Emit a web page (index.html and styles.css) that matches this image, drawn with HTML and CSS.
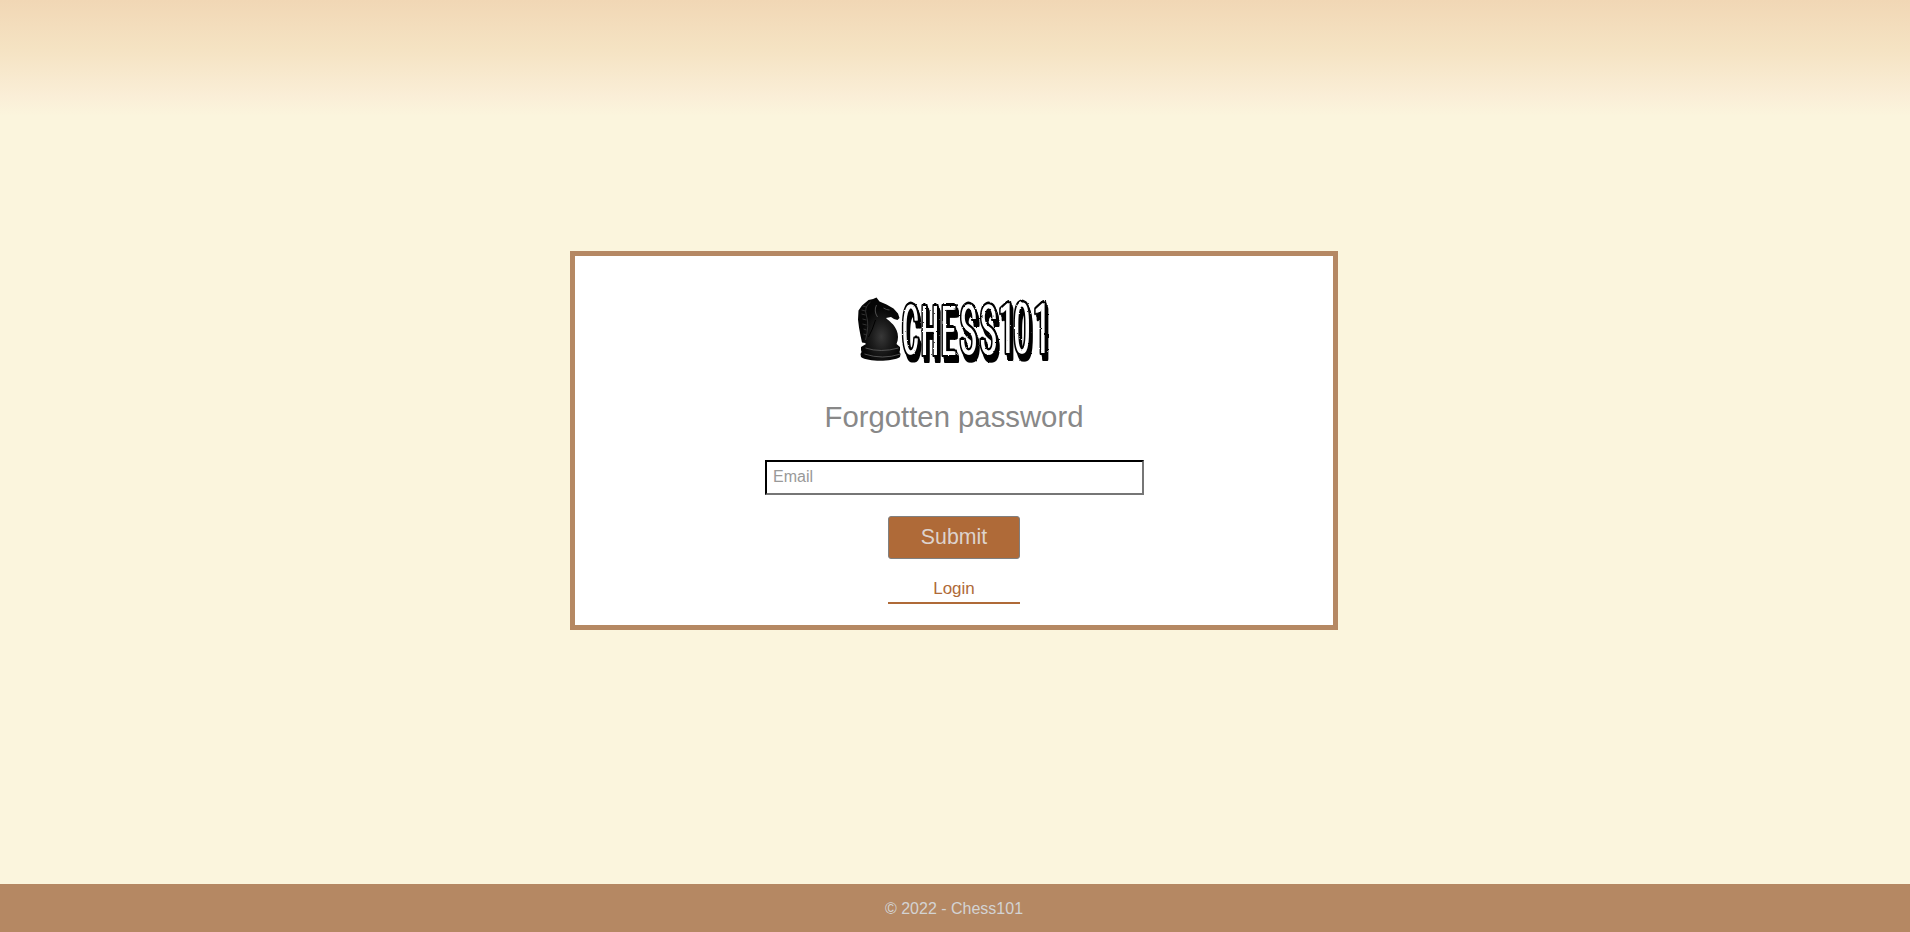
FILE: index.html
```html
<!DOCTYPE html>
<html lang="en">
<head>
<meta charset="utf-8">
<title>Chess101 - Forgotten password</title>
<link rel="stylesheet" href="styles.css">
</head>
<body>
<main class="page">
  <form class="card">
    <svg class="logo" viewBox="0 0 210 80" role="img" aria-label="Chess101">
      <defs>
        <radialGradient id="body" cx=".55" cy=".62" r=".45">
          <stop offset="0" stop-color="#383838"/><stop offset=".5" stop-color="#1c1c1c"/><stop offset="1" stop-color="#060606"/>
        </radialGradient>
        <filter id="worn" x="-5%" y="-5%" width="110%" height="110%">
          <feTurbulence type="fractalNoise" baseFrequency=".35" numOctaves="2" seed="4"/>
          <feDisplacementMap in="SourceGraphic" scale="2" xChannelSelector="R" yChannelSelector="G"/>
        </filter>
        <g id="word" class="word">
          <text transform="translate(52 64) scale(.36 1.03)">C</text>
          <text transform="translate(71 65) scale(.35 1.03)">H</text>
          <text transform="translate(91 65) scale(.36 1.03)">E</text>
          <text transform="translate(110 64) scale(.39 1.03)">S</text>
          <text transform="translate(130 64) scale(.39 1.03)">S</text>
          <text transform="translate(148.500 62.500) scale(.42 1.05)">1</text>
          <text transform="translate(163.500 62.500) scale(.42 1.05)">0</text>
          <text transform="translate(183.500 62.500) scale(.42 1.05)">1</text>
        </g>
      </defs>
      <g transform="translate(1.500 0)">
        <path fill="url(#body)" d="M17 10l4.500-1 3.500-1.500 3 4 7 3 7 4 4.500 5 1.500 4.500-2 2-3.500-1-3-2-5 1c3 3 8 6 10.500 12 2 5 2 9 0 14l3.500 3v3l-.5 2 1 2-.5 3c-8 5-32 5-39 0l-.5-3 1-2-.5-2v-3l5-3-1-1-3-.5-1.500-7-1.500-8-1-8 .5-9 3.500-5z"/>
        <path class="mane" d="M19 12q-7 5-4 14t-1 24M15 17l-4-1M14 21l-4-1M14 25l-4-1M15 30l-4-1M15 35l-4-1M15 40l-3-1M15 45l-3-1"/>
        <path class="neck" d="M24 30q-3 10-7 17"/>
        <path class="shine" d="M32 18q3 2 6 2M25 15q-3 6 1 12M14 58q15 5 33 0M13 64q18 6 36 0"/>
      </g>
      <g filter="url(#worn)">
        <g class="edge">
          <use href="#word" x="-1"/><use href="#word" x="2.400"/><use href="#word" x=".6" y="-1"/><use href="#word" x="1" y="2"/><use href="#word" x="3" y="2"/><use href="#word" x="2" y="4"/><use href="#word" x="4" y="4"/><use href="#word" x="4.500" y="6"/><use href="#word" x="3" y="6"/><use href="#word" x="1.500" y="6"/>
        </g>
        <g class="face"><use href="#word" x="-.2"/><use href="#word" x=".6"/><use href="#word" x="1.400"/></g>
      </g>
    </svg>
    <h1 class="title">Forgotten password</h1>
    <input class="email" type="email" placeholder="Email">
    <button class="submit" type="button">Submit</button>
    <a class="login">Login</a>
  </form>
</main>
<footer class="footer">© 2022 - Chess101</footer>
</body>
</html>
```
FILE: styles.css
```css
* { box-sizing: border-box; }
body {
  margin: 0;
  height: 932px;
  display: flex;
  flex-direction: column;
  font: 16px/18px "Liberation Sans", Arial, sans-serif;
  background: linear-gradient(#f1d7b5 0, #f5e3c3 50px, #faeed7 96px, #fbf5dd 116px, #fbf5dd 100%);
}
.page { flex: 1; padding-top: 251px; }
.card {
  width: 768px;
  height: 379px;
  margin: 0 auto 0 570px;
  border: 5px solid #b58863;
  background: #fff;
  display: flex;
  flex-direction: column;
  align-items: center;
}
.logo { width: 210px; height: 80px; margin-top: 34px; margin-left: 2px; }
.word { font: 300 67px Roboto, sans-serif; }
.edge { fill: #000; stroke: #000; stroke-width: 4px; stroke-linejoin: round; }
.face { fill: #fff; }
.mane { fill: none; stroke: #444; stroke-width: .7px; }
.neck { fill: none; stroke: #000; stroke-width: 1px; }
.shine { fill: none; stroke: #666; stroke-width: 1px; opacity: .75; }
.title {
  margin: 31px 0 0;
  font-size: 29.3px;
  line-height: 32px;
  font-weight: 400;
  color: #888;
}
.email {
  width: 379px;
  height: 35px;
  margin: 27px 0 0 1px;
  padding: 0 6px 2px;
  border: 2px inset #767676;
  border-color: #1e1e20 #767676 #767676 #1e1e20;
  font: 16px "Liberation Sans", Arial, sans-serif;
}
.email::placeholder { color: #999; }
.submit {
  width: 132px;
  height: 43px;
  margin-top: 21px;
  padding: 0;
  border: 1px solid #808080;
  border-radius: 3px;
  background: #af6a38;
  color: #ddd3cd;
  font: 21.3px "Liberation Sans", Arial, sans-serif;
}
.login {
  width: 132px;
  height: 26px;
  margin-top: 19px;
  border-bottom: 2px solid #af6a38;
  color: #af6a38;
  font-size: 17px;
  line-height: 22px;
  text-align: center;
}
.footer {
  height: 48px;
  padding-right: 2px;
  background: #b58863;
  color: #d3d3d3;
  line-height: 49px;
  text-align: center;
}
```
